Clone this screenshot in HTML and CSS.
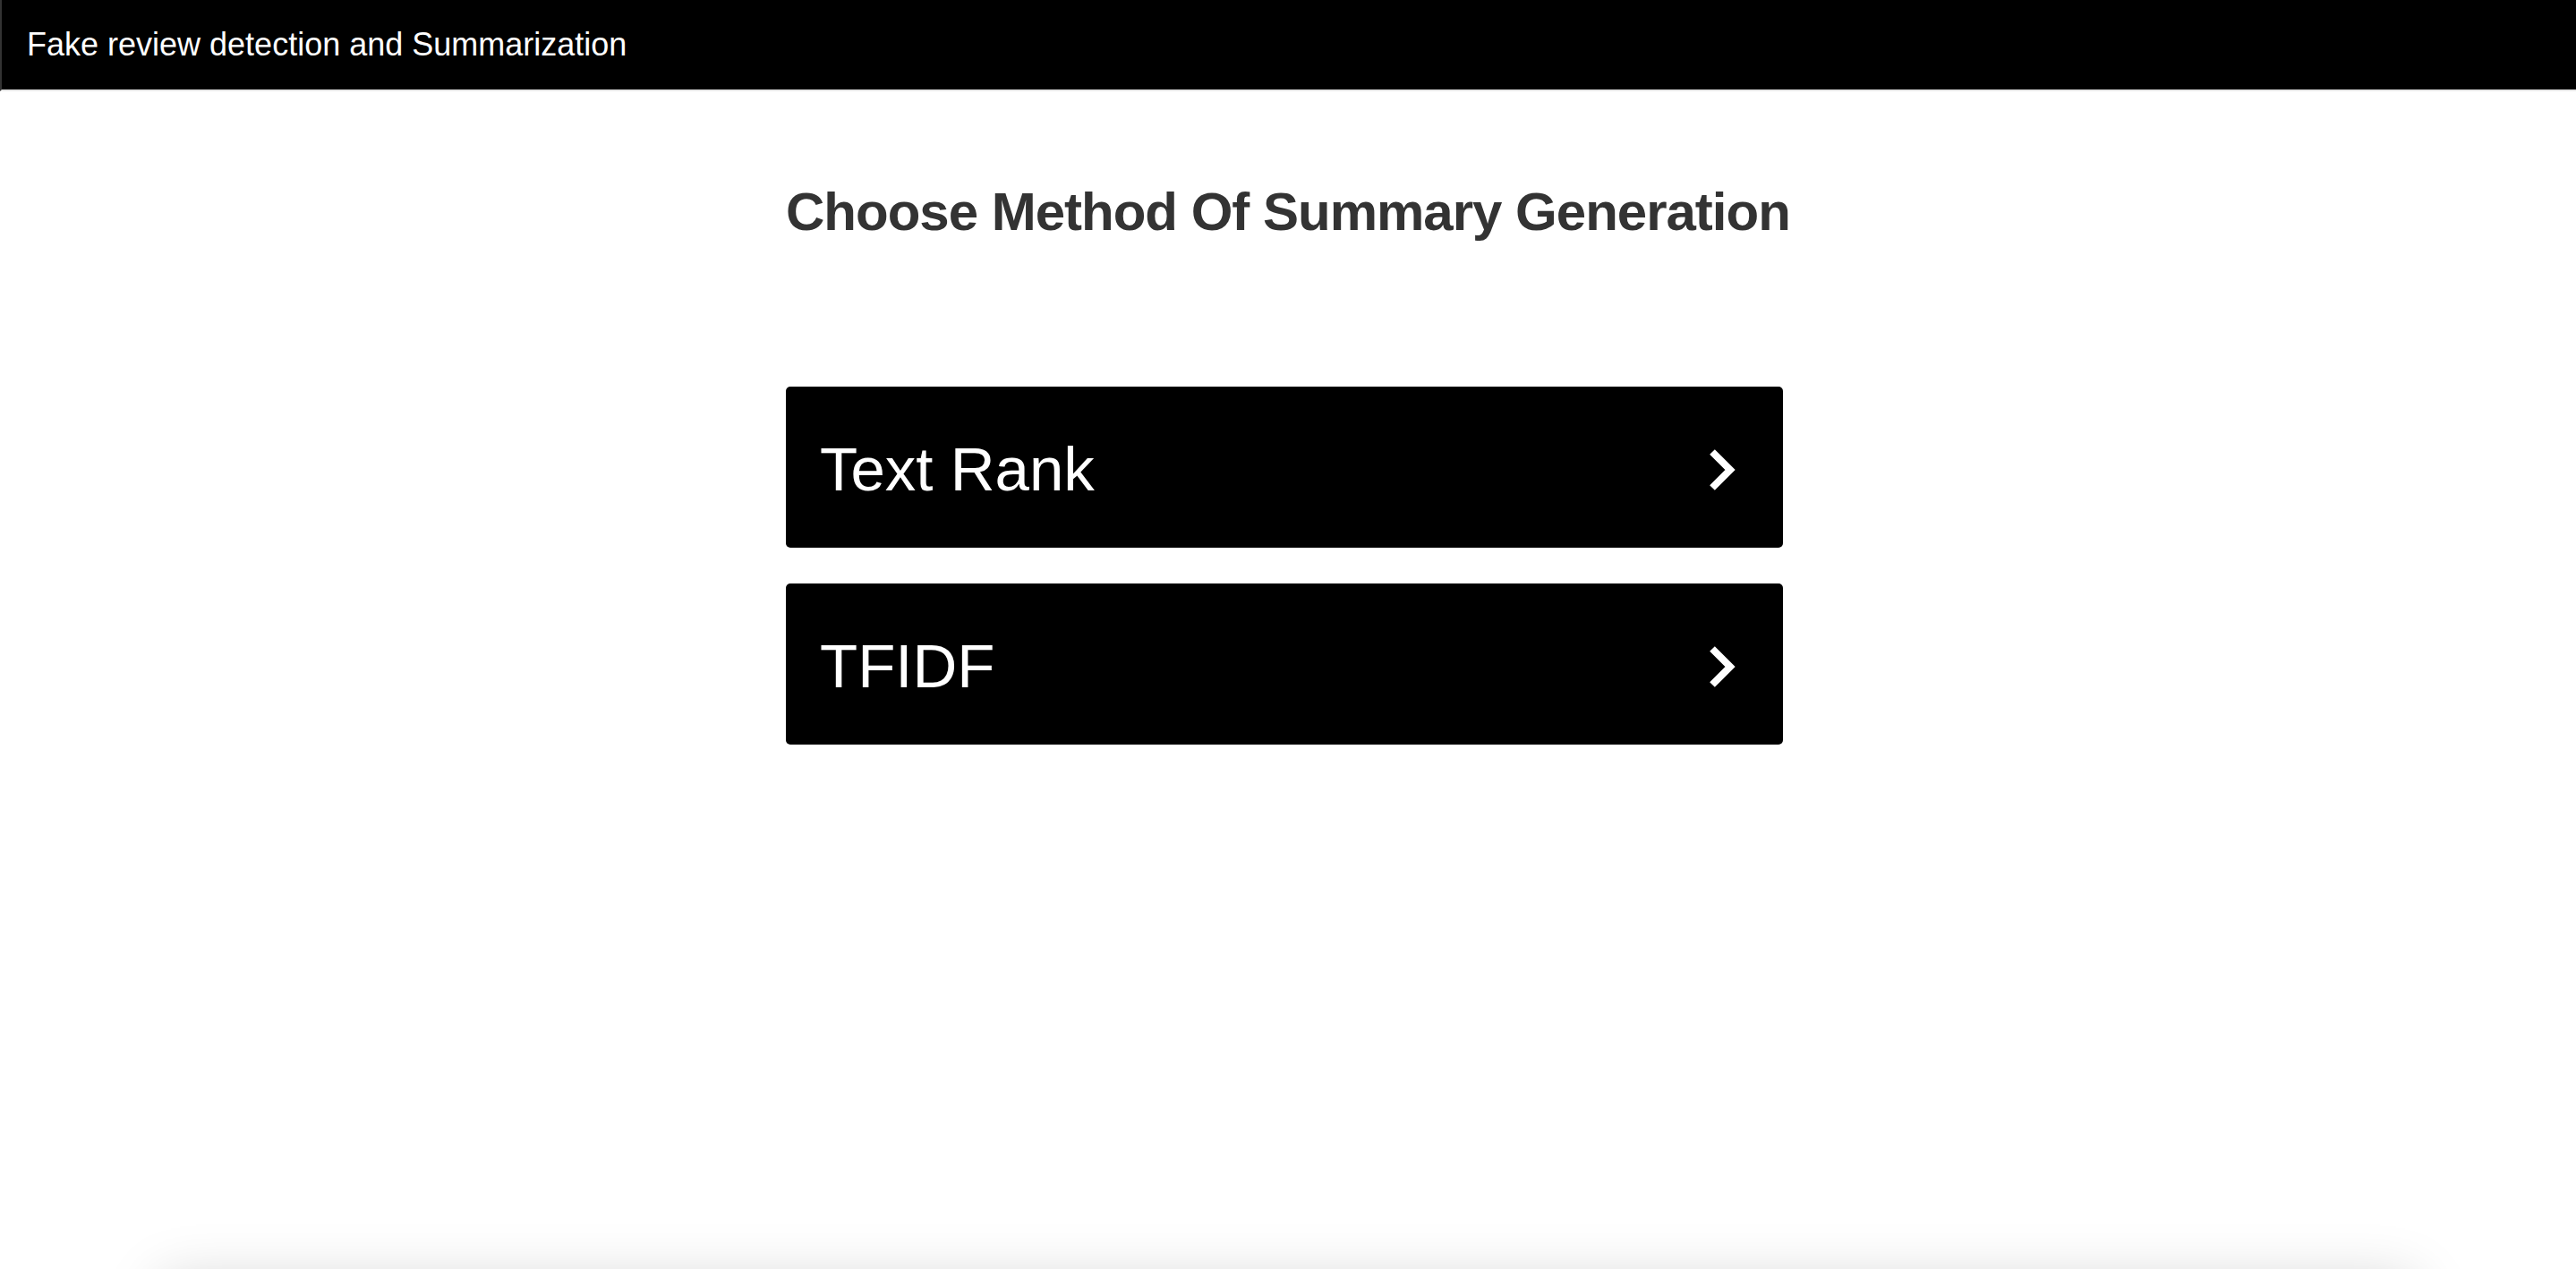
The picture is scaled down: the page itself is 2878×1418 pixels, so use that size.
FILE: index.html
```html
<!DOCTYPE html>
<html lang="en">
<head>
  <meta charset="UTF-8">
  <meta name="viewport" content="width=device-width, initial-scale=1.0">
  <title>Fake review detection and Summarization</title>
  <link rel="stylesheet" href="styles.css">
</head>
<body>
  <header class="topbar">
    <span class="brand">Fake review detection and Summarization</span>
  </header>

  <main class="content">
    <h2 class="page-title">Choose Method Of Summary Generation</h2>

    <div class="method-list">
      <a class="method" href="#textrank">
        <span>Text Rank</span>
        <svg class="chevron" width="32" height="48" viewBox="0 0 32 48">
          <polyline points="5,4 25,24 5,44" fill="none" stroke="#fff" stroke-width="8" stroke-linejoin="miter"/>
        </svg>
      </a>
      <a class="method" href="#tfidf">
        <span>TFIDF</span>
        <svg class="chevron" width="32" height="48" viewBox="0 0 32 48">
          <polyline points="5,4 25,24 5,44" fill="none" stroke="#fff" stroke-width="8" stroke-linejoin="miter"/>
        </svg>
      </a>
    </div>
  </main>

  <section class="results"></section>
</body>
</html>
```

FILE: styles.css
```css
/* Base styling */
body {
  font-family: "Liberation Sans", Arial, sans-serif;
  background-color: #fff;
  margin: 0;
  padding: 0;
}
/* Top bar */
.topbar {
  box-sizing: border-box;
  height: 102px;
  background-color: #000;
  color: #fff;
  display: flex;
  align-items: center;
  padding: 0 28px;
  border-left: 2px solid #333;
  border-bottom: 2px solid #e8e8e8;
  font-size: 36px;
}
/* Main content */
.content {
  width: 1114px;
  margin: 0 auto;
  padding-right: 8px;
}
.page-title {
  margin: 102px 0 162px;
  font-size: 60px;
  line-height: 66px;
  font-weight: 700;
  letter-spacing: -1px;
  color: #333;
  white-space: nowrap;
}
/* Method buttons */
.method-list {
  display: flex;
  flex-direction: column;
  gap: 40px;
}
.method {
  box-sizing: border-box;
  height: 180px;
  display: flex;
  align-items: center;
  justify-content: space-between;
  padding: 5px 52px 0 38px;
  background-color: #000;
  color: #fff;
  border-radius: 5px;
  font-size: 69px;
  line-height: 1;
  text-decoration: none;
}
.chevron {
  display: block;
}
/* Panel below the fold */
.results {
  margin: 599px 180px 0;
  height: 400px;
  background-color: #fff;
  box-shadow: 0 0 60px rgba(0,0,0,0.18);
}
```
